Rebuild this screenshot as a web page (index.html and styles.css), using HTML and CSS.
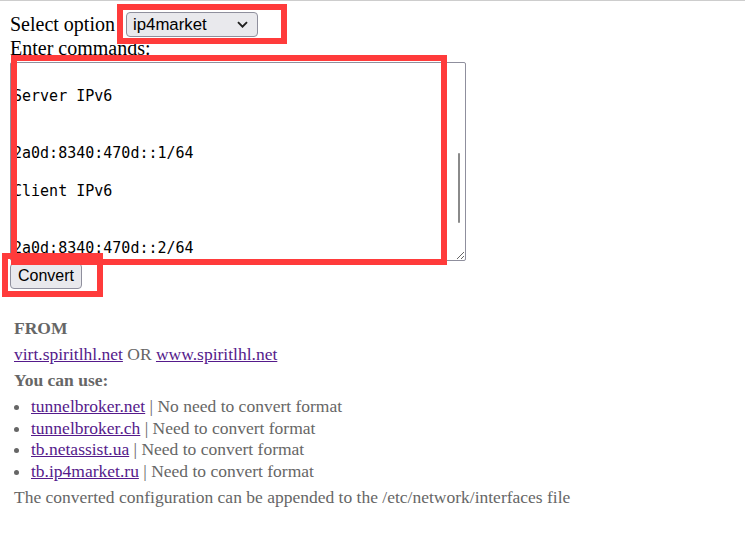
FILE: index.html
```html
<!DOCTYPE html>
<html lang="en">
<head>
<meta charset="utf-8">
<title>IPv6 tunnel configuration converter</title>
<link rel="stylesheet" href="styles.css">
</head>
<body>
<div class="topline"></div>
<main class="page">
  <form class="converter">
    <div class="row-select">
      <label class="label" for="opt">Select option</label>
      <select id="opt" class="select">
        <option selected>ip4market</option>
        <option>tunnelbroker.net</option>
        <option>tunnelbroker.ch</option>
        <option>netassist</option>
      </select>
    </div>
    <label class="label-cmd" for="cmd">Enter commands:</label>
    <div class="ta-wrap">
<textarea id="cmd" class="commands" spellcheck="false">

Server IPv6


2a0d:8340:470d::1/64

Client IPv6


2a0d:8340:470d::2/64</textarea>
      <span class="thumb"></span>
    </div>
    <button type="button" class="btn">Convert</button>
  </form>
  <section class="info">
    <p class="info-line"><b>FROM</b></p>
    <p class="info-line"><a href="#">virt.spiritlhl.net</a> OR <a href="#">www.spiritlhl.net</a></p>
    <p class="info-line"><b>You can use:</b></p>
    <ul class="uses">
      <li><a href="#">tunnelbroker.net</a> | No need to convert format</li>
      <li><a href="#">tunnelbroker.ch</a> | Need to convert format</li>
      <li><a href="#">tb.netassist.ua</a> | Need to convert format</li>
      <li><a href="#">tb.ip4market.ru</a> | Need to convert format</li>
    </ul>
    <p class="note">The converted configuration can be appended to the /etc/network/interfaces file</p>
  </section>
</main>
<div class="mark mark-select"></div>
<div class="mark mark-commands"></div>
<div class="mark mark-convert"></div>
</body>
</html>
```

FILE: styles.css
```css
* { box-sizing: border-box; }
html, body { margin: 0; background: #fff; }
body {
  font-family: "Liberation Serif", "Times New Roman", serif;
  font-size: 20px;
  color: #000;
}
.topline { height: 1px; background: #cdcdcd; }
.page { padding: 0 10px; }
.converter { margin: 0; }
.row-select {
  display: flex;
  align-items: flex-start;
  margin-top: 11px;
  height: 25px;
}
.label { line-height: 23px; padding-top: 1px; }
.select {
  -webkit-appearance: none;
  appearance: none;
  margin: 0 0 0 11px;
  width: 132px;
  height: 25px;
  padding: 0 0 0 6px;
  background: #e9e9ed url("data:image/svg+xml,%3Csvg xmlns='http://www.w3.org/2000/svg' width='11' height='7' viewBox='0 0 11 7'%3E%3Cpath d='M1 1.2l4.5 4.5 4.5-4.5' fill='none' stroke='%23202020' stroke-width='1.9'/%3E%3C/svg%3E") no-repeat right 9px center;
  border: 1px solid #8f8f9d;
  border-radius: 4px;
  font: 16.8px "Liberation Sans", Arial, sans-serif;
  color: #000;
}
.label-cmd { display: block; line-height: 21px; padding-top: 1px; }
.ta-wrap {
  position: relative;
  width: 456px;
  height: 199px;
  margin-top: 3px;
}
.commands {
  display: block;
  width: 100%;
  height: 100%;
  margin: 0;
  padding: 4.5px 2px 0 2px;
  border: 1px solid #8f8f9d;
  border-radius: 2px;
  font: 15px/19px "DejaVu Sans Mono", monospace;
  color: #000;
  background: #fff;
  overflow: hidden;
  resize: both;
}
.thumb {
  position: absolute;
  left: 448px;
  top: 91px;
  width: 2px;
  height: 70px;
  background: #8a8a8a;
  border-radius: 1px;
}
.btn {
  display: block;
  margin-top: 2px;
  height: 26px;
  padding: 0 7px;
  background: #e9e9ed;
  border: 1px solid #8f8f9d;
  border-radius: 4px;
  font: 16px "Liberation Sans", Arial, sans-serif;
  color: #000;
}
.info {
  margin-top: 26px;
  padding-left: 4px;
  color: #666;
  font-size: 17.5px;
}
.info-line { margin: 0; line-height: 26px; }
.info a { color: #551a8b; }
.uses { margin: 3px 0 0; padding-left: 17px; line-height: 21.7px; }
.note { margin: 1px 0 0; line-height: 26px; }
.mark {
  position: absolute;
  border: 6px solid #ff3b3b;
  pointer-events: none;
}
.mark-select { left: 117px; top: 4px; width: 170px; height: 40px; }
.mark-commands { left: 11px; top: 55px; width: 436px; height: 210px; }
.mark-convert { left: 2px; top: 253px; width: 101px; height: 44px; }
```
